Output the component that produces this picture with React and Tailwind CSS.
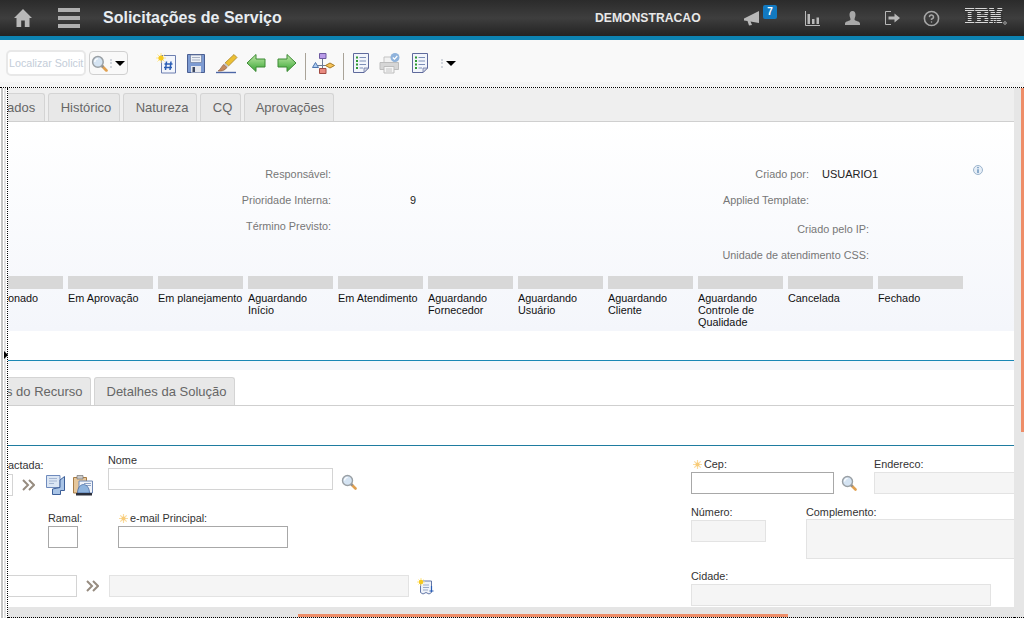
import { CircleHelp } from 'lucide-react';

const statuses = [
  ['Em Aprovação'],
  ['Em planejamento'],
  ['Aguardando', 'Início'],
  ['Em Atendimento'],
  ['Aguardando', 'Fornecedor'],
  ['Aguardando', 'Usuário'],
  ['Aguardando', 'Cliente'],
  ['Aguardando', 'Controle de', 'Qualidade'],
  ['Cancelada'],
  ['Fechado'],
];

function Lens({ size = 16 }) {
  return (
    <svg width={size} height={size} viewBox="0 0 16 16" className="shrink-0">
      <path d="M9.5 9.5L14.5 14.5" stroke="#e0a050" strokeWidth="2.6" strokeLinecap="round" />
      <path d="M9.5 9.5L11.5 11.5" stroke="#8f8f8f" strokeWidth="2.4" />
      <circle cx="6.5" cy="6.5" r="5" fill="#d5e4f3" stroke="#9aa0a5" strokeWidth="1.4" />
      <path d="M3.6 6.5a3 3 0 0 1 3-3" fill="none" stroke="#fff" strokeWidth="1.1" />
    </svg>
  );
}

function Star() {
  return (
    <svg width="9" height="9" viewBox="0 0 9 9" className="shrink-0">
      <path d="M4.5 0V9M0 4.5H9M1.3 1.3L7.7 7.7M7.7 1.3L1.3 7.7" stroke="#fadb9f" strokeWidth="1.2" />
      <circle cx="4.5" cy="4.5" r="2" fill="#f8cb78" />
    </svg>
  );
}

function Chevrons() {
  return (
    <svg width="13" height="12" viewBox="0 0 13 12" className="shrink-0">
      <path d="M1 1L6 6L1 11M7 1L12 6L7 11" fill="none" stroke="#978c80" strokeWidth="2" />
    </svg>
  );
}

function ListPage() {
  return (
    <svg width="16" height="20" viewBox="0 0 16 20">
      <path d="M.5.5H15.5V15L11 19.5H.5Z" fill="#f2f5fb" stroke="#5f6a9c" />
      <path d="M15.5 15H11V19.5Z" fill="#d5d9e6" stroke="#5f6a9c" strokeWidth=".7" />
      <path d="M3 3.5h2v2H3zM3 7h2v2H3zM3 10.5h2v2H3zM3 14h2v2H3z" fill="#2f9a32" />
      <path d="M6.5 4.5H13M6.5 8H13M6.5 11.5H13M6.5 15H10" stroke="#7d8fb8" strokeWidth="1.2" />
    </svg>
  );
}

function ArrowIcon({ flip }) {
  return (
    <svg width="20" height="20" viewBox="0 0 20 20" className={flip ? '-scale-x-100' : ''}>
      <defs>
        <linearGradient id={flip ? 'arrowA' : 'arrowB'} x1="0" y1="0" x2="0" y2="1">
          <stop offset="0" stopColor="#c2eaa9" />
          <stop offset="1" stopColor="#37a533" />
        </linearGradient>
      </defs>
      <path d="M1 6H10V1.5L19 10L10 18.5V14H1Z" fill={`url(#${flip ? 'arrowA' : 'arrowB'})`} stroke="#3d8a35" strokeLinejoin="round" />
    </svg>
  );
}

function NewIcon() {
  return (
    <svg width="21" height="21" viewBox="0 0 21 21">
      <path d="M5.5 2.5H19.5V20H5.5Z" fill="#f3f6fc" stroke="#6d7fb0" />
      <path d="M10.5 8.5L9.5 17M15 8.5L14 17M8.5 11H16.5M8 14.5H16" stroke="#2a5db5" strokeWidth="1.5" />
      <path d="M5 0V10M0 5H10M1.5 1.5L8.5 8.5M8.5 1.5L1.5 8.5" stroke="#ffe68a" strokeWidth="1" />
      <circle cx="5" cy="5" r="2.6" fill="#f6c91e" />
    </svg>
  );
}

function SaveIcon() {
  return (
    <svg width="18" height="20" viewBox="0 0 18 20">
      <path d="M.5 1.5H17.5V19.5H.5Z" fill="#7d9bd2" stroke="#4b5f92" />
      <path d="M3.5 2H14.5V9.5H3.5Z" fill="#eef1f6" stroke="#6d7c9e" strokeWidth=".7" />
      <path d="M5 4.5H13M5 7H13" stroke="#a9b2c4" />
      <path d="M4 13H14V19.5H4Z" fill="#e7e9ee" />
      <path d="M5.5 14H8V19H5.5Z" fill="#3b4660" />
    </svg>
  );
}

function BrushIcon() {
  return (
    <svg width="23" height="21" viewBox="0 0 23 21">
      <path d="M1 19.5H21" stroke="#4d67a6" strokeWidth="1.4" />
      <path d="M10 10L19 1.5L22 4.5L13.5 13Z" fill="#ecc034" stroke="#a8852a" strokeWidth=".8" />
      <path d="M10 10L13.5 13L12 14.5L8.5 11.5Z" fill="#c9c9c9" />
      <path d="M8.5 11.5L12 14.5C10 17.5 6 18.5 3 18C5.5 16.5 6.5 13.5 8.5 11.5Z" fill="#c48a60" stroke="#86583a" strokeWidth=".6" />
    </svg>
  );
}

function FlowIcon() {
  return (
    <svg width="23" height="21" viewBox="0 0 23 21">
      <path d="M10.5 5V15M5 12.5H15" stroke="#6d7a94" fill="none" />
      <path d="M7.5.5H14V5.5H7.5Z" fill="#b99be8" stroke="#6d5aa0" />
      <path d="M3.5 9.5L6.5 14.5H.5Z" fill="#aecdf0" stroke="#4f74ad" />
      <path d="M18 10L22.5 12.5L18 15L13.5 12.5Z" fill="#f6c35a" stroke="#a87c25" />
      <path d="M7.5 15.5H14V20.5H7.5Z" fill="#e88a80" stroke="#a14b42" />
    </svg>
  );
}

function PrinterIcon() {
  return (
    <svg width="21" height="21" viewBox="0 0 21 21">
      <path d="M5 4H15V10H5Z" fill="#f2f2f2" stroke="#c3c3c3" />
      <path d="M1 9.5H19.5V16.5H1Z" fill="#d6d6d6" stroke="#bdbdbd" />
      <path d="M5 13.5H15V20H5Z" fill="#f5f5f5" stroke="#bdbdbd" />
      <path d="M7 16H13M7 18H13" stroke="#c6c6c6" />
      <circle cx="16" cy="4.5" r="4.5" fill="#8fb3dc" />
      <path d="M13.8 4.5L15.5 6.2L18.3 3" fill="none" stroke="#fff" strokeWidth="1.2" />
    </svg>
  );
}

function Caret() {
  return <div className="w-0 h-0 border-l-[5px] border-r-[5px] border-t-[5px] border-l-transparent border-r-transparent border-t-black" />;
}

function Grip() {
  return <div className="w-[2px] h-[9px] border-l-2 border-dotted border-gray-300" />;
}

function NotesIcon() {
  return (
    <svg width="19" height="20" viewBox="0 0 19 20">
      <path d="M.5.5H14V12.5H.5Z" fill="#dbe6f4" stroke="#6f8bbd" />
      <path d="M3 3.5H11M3 6H11M3 8.5H8" stroke="#a5b6d2" />
      <path d="M18.5 1.5V15.5H14.5V19.5H6.5V14L14 12.5V5Z" fill="#a9c4e6" stroke="#3d5f98" />
    </svg>
  );
}

function BellIcon() {
  return (
    <svg width="20" height="21" viewBox="0 0 20 21">
      <path d="M.5 2.5H13.5V18H.5Z" fill="#e6c79c" stroke="#a87c45" />
      <path d="M4 .5H10V4H4Z" fill="#c9c9c9" stroke="#777" strokeWidth=".7" />
      <path d="M6 6H19.5V18H6Z" fill="#f1f4fa" stroke="#6f88b5" />
      <path d="M11 8.5H18M12 10.5H18" stroke="#8ea3c6" />
      <path d="M4.5 18C4.5 12 8 9.5 10.5 9.5S16.5 12 16.5 18Z" fill="#8fb4de" stroke="#3d5f98" strokeWidth=".7" />
      <path d="M3 18H19V20.5H3Z" fill="#2b2f3a" />
    </svg>
  );
}

function NewNoteIcon() {
  return (
    <svg width="17" height="17" viewBox="0 0 17 17">
      <path d="M3.5 3H14.5V14.5L12 16L9 14.5L6 16L3.5 14.5Z" fill="#eef2f9" stroke="#6478a8" />
      <path d="M6 7H12M6 9.5H12M6 12H11" stroke="#9aaac8" />
      <path d="M14.5 8V14M12.5 13H16.5" stroke="#2a5db5" strokeWidth="1.2" />
      <path d="M4 0V8M0 4H8M1.5 1.5L6.5 6.5M6.5 1.5L1.5 6.5" stroke="#ffe68a" />
      <circle cx="4" cy="4" r="2.2" fill="#f6c91e" />
    </svg>
  );
}

function IbmLogo() {
  return (
    <svg width="42" height="17" viewBox="0 0 42 17">
      <g transform="scale(.93 1)" fill="#d8d8d8">
        <path d="M0 0H10V3H7V14H10V16H0V14H3V3H0Z" />
        <path d="M11 0H22Q25 0 25 3V6L23.5 8L25 10V13Q25 16 22 16H11V14H13V3H11ZM17 3V6.5H21V3ZM17 9.5V13H21V9.5Z" />
        <path d="M26 0H31L33 7L35 0H40V3H38.5V14H40V16H34V9L32.5 16H31.5L30 9V16H26V14H27.5V3H26Z" />
      </g>
      <path d="M0 1.5H38M0 3.5H38M0 5.5H38M0 7.5H38M0 9.5H38M0 11.5H38M0 13.5H38M0 15.5H38" stroke="#333" strokeWidth="1" />
      <circle cx="40" cy="15" r="1.3" fill="none" stroke="#bbb" strokeWidth=".8" />
    </svg>
  );
}

function Label({ children, className = '' }) {
  return <div className={`h-[14px] leading-[14px] whitespace-nowrap text-[#333] ${className}`}>{children}</div>;
}

export default function App() {
  return (
    <div className="w-[1024px] h-[618px] overflow-hidden flex flex-col bg-white text-[10.85px] font-['Liberation_Sans',Arial,sans-serif]">
      {/* top bar */}
      <div className="h-[40px] shrink-0 flex items-center bg-gradient-to-b from-[#2b2b2b] via-[#3e3e3e] to-[#232323] border-b-4 border-[#0d83b2] text-[#b5b5b5]">
        <svg width="18" height="18" viewBox="0 0 18 18" className="ml-[14px]">
          <path d="M9 0L18 9H15.5V18H10.8V11.5H7.2V18H2.5V9H0Z" fill="#b8b8b8" />
        </svg>
        <div className="ml-[26px] w-[22px] flex flex-col gap-[4px]">
          <div className="h-[4px] bg-[#b0b0b0]" />
          <div className="h-[4px] bg-[#b0b0b0]" />
          <div className="h-[4px] bg-[#b0b0b0]" />
        </div>
        <div className="ml-[23px] w-[492px] text-[16px] font-bold text-[#e8edf2]">Solicitações de Serviço</div>
        <div className="w-[149px] text-[12.2px] font-bold text-[#e8e8e8]">DEMONSTRACAO</div>
        <svg width="16" height="15" viewBox="0 0 16 15">
          <path d="M0 7.5L15 0V12L6.5 10.5L8 14L5 14.5L3.5 10L0 9.5Z" fill="#b8b8b8" />
        </svg>
        <div className="ml-[3px] mb-[12px] w-[14px] h-[14px] rounded-[2px] bg-[#1279c0] text-white text-[10px] font-bold leading-[14px] text-center">7</div>
        <svg width="15" height="15" viewBox="0 0 15 15" className="ml-[28px]">
          <path d="M.5 0V14.5H15" fill="none" stroke="#b8b8b8" />
          <path d="M2.5 3H5V13H2.5ZM7 8H9.5V13H7ZM11.5 6.5H14V13H11.5Z" fill="#b8b8b8" />
        </svg>
        <svg width="15" height="14" viewBox="0 0 15 14" className="ml-[25px]">
          <path d="M7.5 0C9.5 0 10.5 1.7 10.5 3.8C10.5 6 9.5 7 9.5 8.5C9.5 10 15 10 15 12.5V14H0V12.5C0 10 5.5 10 5.5 8.5C5.5 7 4.5 6 4.5 3.8C4.5 1.7 5.5 0 7.5 0Z" fill="#a8a8a8" />
        </svg>
        <svg width="15" height="14" viewBox="0 0 15 14" className="ml-[25px]">
          <path d="M6 .5H.5V13.5H6" fill="none" stroke="#b8b8b8" />
          <path d="M3.5 5.5H9.5V2.5L15 7L9.5 11.5V8.5H3.5Z" fill="#b8b8b8" />
        </svg>
        <CircleHelp size={17} strokeWidth={2.2} className="ml-[23px] text-[#a8a8a8]" />
        <div className="ml-[25px] mb-[3px]"><IbmLogo /></div>
      </div>

      {/* toolbar */}
      <div className="h-[42px] shrink-0 pt-[4px] flex items-center bg-[#f9f9f9]">
        <div className="ml-[6px] w-[80px] h-[26px] rounded-[5px] border-2 border-[#e8e8e8] bg-white overflow-hidden pl-[1px] leading-[22px] whitespace-nowrap text-[10.7px] text-[#c4cdd8]">Localizar Solicit</div>
        <div className="ml-[3px] w-[39px] h-[24px] rounded-[4px] border border-[#d0d0d0] flex items-center pl-[1px]">
          <Lens size={17} />
          <div className="ml-[2px]"><Grip /></div>
          <div className="ml-[3px]"><Caret /></div>
        </div>
        <div className="ml-[28px]"><NewIcon /></div>
        <div className="ml-[10px]"><SaveIcon /></div>
        <div className="ml-[10px]"><BrushIcon /></div>
        <div className="ml-[8px]"><ArrowIcon flip /></div>
        <div className="ml-[11px]"><ArrowIcon /></div>
        <div className="ml-[8px] mt-[7px] w-px h-[27px] bg-[#a9a398]" />
        <div className="ml-[6px]"><FlowIcon /></div>
        <div className="ml-[8px] mt-[7px] w-px h-[27px] bg-[#a9a398]" />
        <div className="ml-[9px]"><ListPage /></div>
        <div className="ml-[10px]"><PrinterIcon /></div>
        <div className="ml-[12px]"><ListPage /></div>
        <div className="ml-[13px]"><Grip /></div>
        <div className="ml-[3px]"><Caret /></div>
      </div>
      <div className="h-[5px] shrink-0 bg-[#f4f4f4]" />

      {/* body */}
      <div className="flex-1 min-h-0 flex border-t border-dotted border-black">
        <div className="w-[7px] shrink-0 relative flex">
          <div className="ml-[1px] w-[2px] bg-[#c4c4c4]" />
          <div className="ml-[1px] w-[2px] bg-[#e2e2e2]" />
          <div className="absolute left-[4px] top-[263px] w-0 h-0 border-y-[4px] border-l-[4px] border-y-transparent border-l-black" />
        </div>

        <div className="flex-1 min-w-0 flex flex-col border-l border-dotted border-black">
          {/* upper tabs */}
          <div className="h-[34px] shrink-0 flex items-end gap-[3px] bg-[#efefef] border-b border-[#cfcfcf] text-[13px] text-[#666]">
            <div className="w-[37px] h-[28px] leading-[28px] indent-[-1px] bg-[#e8e8e8] border-r border-t border-[#d4d4d4] rounded-tr-[3px] overflow-hidden">ados</div>
            <div className="w-[72px] h-[28px] leading-[28px] pl-[4px] text-center bg-[#e8e8e8] border-x border-t border-[#d4d4d4] rounded-t-[3px]">Histórico</div>
            <div className="w-[74px] h-[28px] leading-[28px] pl-[4px] text-center bg-[#e8e8e8] border-x border-t border-[#d4d4d4] rounded-t-[3px]">Natureza</div>
            <div className="w-[41px] h-[28px] leading-[28px] pl-[4px] text-center bg-[#e8e8e8] border-x border-t border-[#d4d4d4] rounded-t-[3px]">CQ</div>
            <div className="w-[90px] h-[28px] leading-[28px] pl-[2px] text-center bg-[#e8e8e8] border-x border-t border-[#d4d4d4] rounded-t-[3px]">Aprovações</div>
          </div>

          {/* details + status */}
          <div className="h-[209px] shrink-0 pt-[39px] bg-gradient-to-b from-white to-[#f4f6fb] text-[#777]">
            <div className="flex h-[26px] items-center">
              <div className="w-[323px] text-right">Responsável:</div>
              <div className="w-[478px] text-right">Criado por:</div>
              <div className="ml-[13px] text-[11px] text-[#222]">USUARIO1</div>
              <svg width="10" height="10" viewBox="0 0 10 10" className="ml-[95px] mb-[9px]">
                <circle cx="5" cy="5" r="4.5" fill="#e6eef7" stroke="#9db4cc" />
                <path d="M5 2V3.2M5 4.2V8" stroke="#4f7fae" strokeWidth="1.2" />
              </svg>
            </div>
            <div className="flex h-[27px] items-center">
              <div className="w-[323px] text-right">Prioridade Interna:</div>
              <div className="w-[85px] pl-[79px] text-[#222]">9</div>
              <div className="w-[393px] text-right">Applied Template:</div>
            </div>
            <div className="flex h-[28px] items-center">
              <div className="w-[323px] mb-[4px] text-right">Término Previsto:</div>
              <div className="w-[538px] mt-[2px] text-right">Criado pelo IP:</div>
            </div>
            <div className="flex h-[27px] items-center">
              <div className="w-[861px] text-right">Unidade de atendimento CSS:</div>
            </div>
            <div className="mt-[7px] flex gap-[5px] text-[#111] leading-[12px]">
              <div className="w-[55px] shrink-0 overflow-hidden">
                <div className="h-[13px] mb-[3px] bg-[#d8d8d8]" />
                onado
              </div>
              {statuses.map((lines) => (
                <div key={lines.join(' ')} className="w-[85px] shrink-0">
                  <div className="h-[13px] mb-[3px] bg-[#d8d8d8]" />
                  {lines.map((line) => <div key={line} className="whitespace-nowrap">{line}</div>)}
                </div>
              ))}
            </div>
          </div>

          <div className="h-[29px] shrink-0 bg-white" />
          <div className="h-[10px] shrink-0 bg-[#f4f6fb] border-t border-[#1a87b5]" />

          {/* lower tabs */}
          <div className="h-[36px] shrink-0 flex items-end gap-[3px] border-b border-[#cfcfcf] text-[13px] text-[#666]">
            <div className="w-[83px] h-[28px] leading-[28px] indent-[-2px] bg-[#e8e8e8] border-r border-t border-[#d4d4d4] rounded-tr-[3px] whitespace-nowrap overflow-hidden">s do Recurso</div>
            <div className="w-[141px] h-[28px] leading-[28px] pl-[4px] text-center bg-[#e8e8e8] border-x border-t border-[#d4d4d4] rounded-t-[3px]">Detalhes da Solução</div>
          </div>
          <div className="h-[39px] shrink-0 bg-white" />

          {/* form */}
          <div className="flex-1 min-h-0 flex border-t border-[#1f7ca0]">
            <div className="w-[683px] shrink-0">
              <div className="flex h-[50px]">
                <div className="w-[100px] shrink-0 pt-[12px]">
                  <Label>actada:</Label>
                  <div className="mt-[2px] flex items-center">
                    <div className="w-[5px] h-[22px] border-y border-r border-[#d4d4d4]" />
                    <div className="ml-[9px]"><Chevrons /></div>
                    <div className="ml-[11px]"><NotesIcon /></div>
                    <div className="ml-[8px]"><BellIcon /></div>
                  </div>
                </div>
                <div className="pt-[7px]">
                  <Label>Nome</Label>
                  <div className="mt-px flex items-center">
                    <div className="w-[225px] h-[22px] border border-[#d4d4d4]" />
                    <div className="ml-[8px] mt-[6px]"><Lens /></div>
                  </div>
                </div>
              </div>
              <div className="mt-[15px] flex">
                <div className="ml-[40px] w-[70px]">
                  <Label>Ramal:</Label>
                  <div className="mt-px w-[30px] h-[22px] border border-[#a8a8a8]" />
                </div>
                <div>
                  <Label className="flex items-center gap-[2px] pl-px"><Star />e-mail Principal:</Label>
                  <div className="mt-px w-[170px] h-[22px] border border-[#a8a8a8]" />
                </div>
              </div>
              <div className="mt-[27px] flex items-center">
                <div className="w-[69px] h-[22px] border-y border-r border-[#d4d4d4]" />
                <div className="ml-[9px]"><Chevrons /></div>
                <div className="ml-[10px] w-[300px] h-[22px] bg-[#f5f5f5] border border-[#e3e3e3]" />
                <div className="ml-[8px]"><NewNoteIcon /></div>
              </div>
            </div>

            <div className="flex-1 min-w-0">
              <div className="mt-[11px] flex">
                <div>
                  <Label className="flex items-center gap-[2px] pl-[2px]"><Star />Cep:</Label>
                  <div className="mt-px flex items-center">
                    <div className="w-[143px] h-[22px] border border-[#a8a8a8]" />
                    <div className="ml-[7px] w-[33px]"><Lens /></div>
                  </div>
                </div>
                <div className="flex-1 min-w-0">
                  <Label>Endereco:</Label>
                  <div className="mt-px h-[22px] bg-[#f5f5f5] border-y border-l border-[#e3e3e3]" />
                </div>
              </div>
              <div className="mt-[11px] flex">
                <div className="w-[115px]">
                  <Label>Número:</Label>
                  <div className="mt-px w-[75px] h-[22px] bg-[#f5f5f5] border border-[#e3e3e3]" />
                </div>
                <div className="flex-1 min-w-0">
                  <Label>Complemento:</Label>
                  <div className="h-[40px] bg-[#f5f5f5] border-y border-l border-[#e3e3e3]" />
                </div>
              </div>
              <div className="mt-[10px]">
                <Label>Cidade:</Label>
                <div className="mt-px w-[300px] h-[22px] bg-[#f5f5f5] border border-[#e3e3e3]" />
              </div>
            </div>
          </div>

          {/* horizontal scrollbar */}
          <div className="h-[11px] shrink-0 flex items-end bg-[#e5e5e5] border-b border-dotted border-black">
            <div className="ml-[290px] w-[490px] h-[3px] bg-[#ee8d68]" />
          </div>
        </div>

        {/* vertical scrollbar */}
        <div className="w-[10px] shrink-0 flex flex-col items-end bg-[#e6e6e6] border-b border-dotted border-black">
          <div className="w-[3px] h-[344px] bg-[#ee8d68]" />
        </div>
      </div>
    </div>
  );
}
